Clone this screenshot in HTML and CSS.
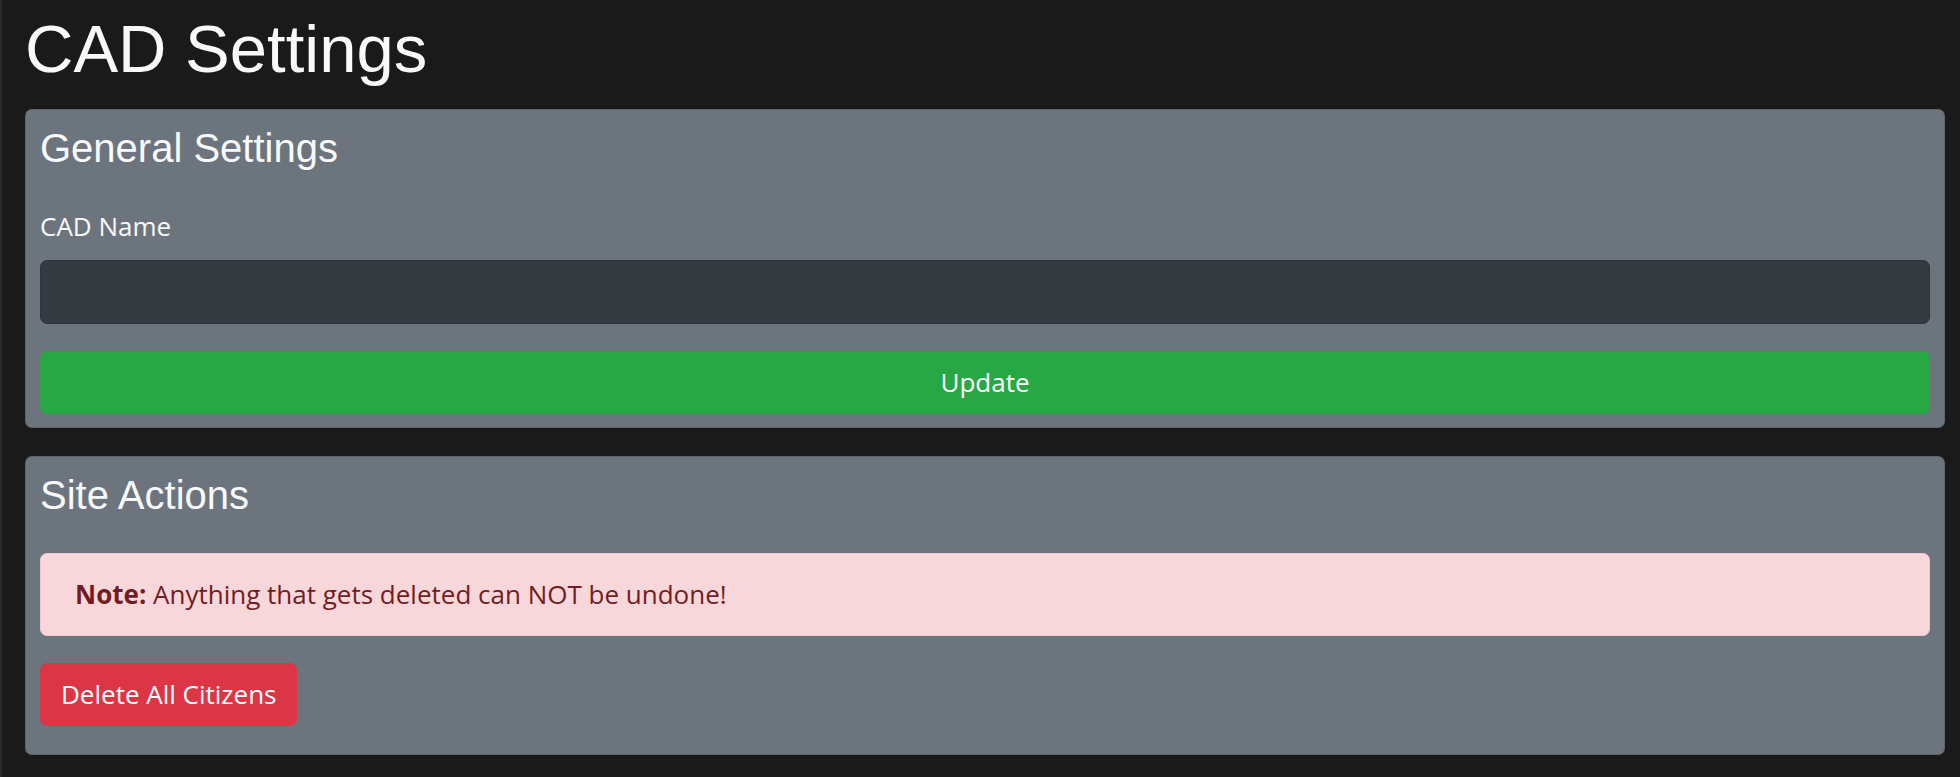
FILE: index.html
```html
<!DOCTYPE html>
<html lang="en">
<head>
<meta charset="utf-8">
<title>CAD Settings</title>
<link rel="stylesheet" href="styles.css">
</head>
<body>
<div class="page">
  <h1 class="page-title">CAD Settings</h1>

  <section class="card">
    <h4 class="card-title">General Settings</h4>
    <form class="form" onsubmit="return false">
      <div class="form-group">
        <label class="label" for="cadName">CAD Name</label>
        <input class="input" id="cadName" type="text">
      </div>
      <button class="btn btn-success btn-block" type="submit">Update</button>
    </form>
  </section>

  <section class="card">
    <h4 class="card-title">Site Actions</h4>
    <div class="alert"><strong>Note:</strong> Anything that gets deleted can NOT be undone!</div>
    <button class="btn btn-danger btn-last" type="button">Delete All Citizens</button>
  </section>
</div>
</body>
</html>
```

FILE: styles.css
```css
html, body {
  margin: 0;
  padding: 0;
  background: #1a1a1a;
}
body {
  font-family: "Open Sans", "Noto Sans", sans-serif;
  font-size: 26px;
  line-height: 41px;
  color: #f8f9fa;
}
.page {
  min-height: 777px;
  box-sizing: border-box;
  border-left: 2px solid #2a2a2a;
  padding: 8px 15px 0 23px;
}
.page-title {
  font-family: "Liberation Sans", Arial, sans-serif;
  font-weight: 400;
  font-size: 67px;
  line-height: 82px;
  margin: 0 0 19px;
  color: #f8f9fa;
}
.card {
  background: #6c757d;
  border: 1px solid rgba(0, 0, 0, 0.125);
  border-radius: 7px;
  padding: 14px 14px 13px;
  margin-bottom: 28px;
}
.card-title {
  font-family: "Liberation Sans", Arial, sans-serif;
  font-weight: 400;
  font-size: 40px;
  line-height: 49px;
  margin: 0 0 33px;
  color: #f8f9fa;
}
.form-group {
  margin-bottom: 27px;
}
.label {
  display: block;
  margin-bottom: 13px;
}
.input {
  display: block;
  box-sizing: border-box;
  width: 100%;
  height: 64px;
  background: #343a40;
  border: 1px solid #30353b;
  border-radius: 7px;
  color: #fff;
  font: inherit;
  padding: 10px 20px;
}
.btn {
  display: inline-block;
  box-sizing: border-box;
  height: 63px;
  border: 1px solid transparent;
  border-radius: 7px;
  font: inherit;
  color: #fff;
  padding: 0 20px;
  cursor: pointer;
}
.btn-block {
  display: block;
  width: 100%;
}
.btn-success {
  background: #28a745;
  border-color: #28a745;
}
.btn-danger {
  background: #dc3545;
  border-color: #dc3545;
}
.btn-last {
  margin-bottom: 15px;
  vertical-align: top;
}
.alert {
  background: #f8d7da;
  border: 1px solid #f5c6cb;
  color: #721c24;
  border-radius: 7px;
  padding: 20px 34px;
  margin-bottom: 27px;
}
.alert strong {
  font-weight: 700;
}
```
